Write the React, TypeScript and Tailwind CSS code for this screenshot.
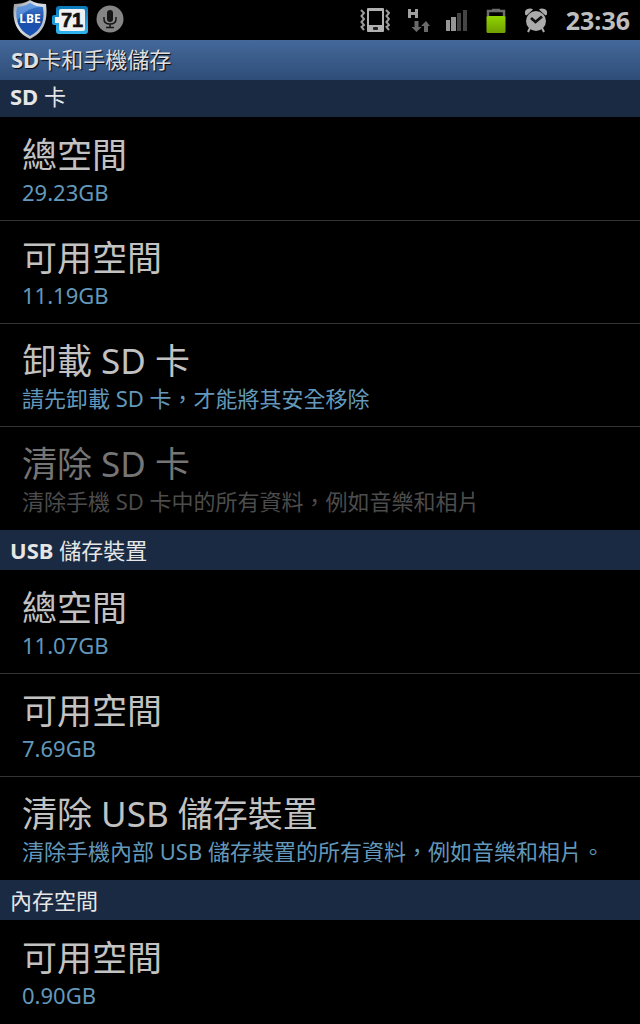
import React from 'react';

interface StorageItem {
    title: string;
    summary: string;
    kind: 'info' | 'action';
    disabled?: boolean;
}

interface StorageSection {
    latin: string; // bold part of the heading
    label: string;
    items: StorageItem[];
}

const sections: StorageSection[] = [
    {
        latin: 'SD',
        label: '卡',
        items: [
            { title: '總空間', summary: '29.23GB', kind: 'info' },
            { title: '可用空間', summary: '11.19GB', kind: 'info' },
            { title: '卸載 SD 卡', summary: '請先卸載 SD 卡，才能將其安全移除', kind: 'action' },
            { title: '清除 SD 卡', summary: '清除手機 SD 卡中的所有資料，例如音樂和相片', kind: 'action', disabled: true },
        ],
    },
    {
        latin: 'USB',
        label: '儲存裝置',
        items: [
            { title: '總空間', summary: '11.07GB', kind: 'info' },
            { title: '可用空間', summary: '7.69GB', kind: 'info' },
            { title: '清除 USB 儲存裝置', summary: '清除手機內部 USB 儲存裝置的所有資料，例如音樂和相片。', kind: 'action' },
        ],
    },
    {
        latin: '',
        label: '內存空間',
        items: [{ title: '可用空間', summary: '0.90GB', kind: 'info' }],
    },
];

function ShieldIcon() {
    return (
        <svg width="36" height="40" viewBox="0 0 36 40" aria-label="LBE">
            <defs>
                <linearGradient id="shield" x1="0" y1="0" x2="0" y2="1">
                    <stop offset="0" stopColor="#3f7fd0" />
                    <stop offset="0.5" stopColor="#1c4fa8" />
                    <stop offset="1" stopColor="#1a55b8" />
                </linearGradient>
                <linearGradient id="rim" x1="0" y1="0" x2="1" y2="1">
                    <stop offset="0" stopColor="#8b9199" />
                    <stop offset="0.4" stopColor="#dfe3e8" />
                    <stop offset="1" stopColor="#a9adb2" />
                </linearGradient>
            </defs>
            <path d="M18 0C13 3 7 4 2 4C0 19 3 32 18 39C33 32 36 19 34 4C29 4 23 3 18 0Z" fill="url(#rim)" />
            <path d="M18 3C13 6 9 7 5 7C3 20 6 30 18 36C30 30 33 20 31 7C27 7 23 6 18 3Z" fill="url(#shield)" />
            <path d="M18 3C13 6 9 7 5 7C4 13 4 16 5 22C9 13 18 8 28 7C25 6 22 5 18 3Z" fill="#7fb0ee" opacity="0.55" />
            <text x="18" y="23" textAnchor="middle" fontSize="12" fontWeight="700" fill="#fff">LBE</text>
        </svg>
    );
}

function BatteryPercentIcon() {
    return (
        <svg width="36" height="28" viewBox="0 0 36 28" aria-label="71">
            <defs>
                <linearGradient id="casing" x1="0" y1="0" x2="0" y2="1">
                    <stop offset="0" stopColor="#0a78b8" />
                    <stop offset="1" stopColor="#2fb4f0" />
                </linearGradient>
            </defs>
            <path d="M7 0H33Q36 0 36 3V25Q36 28 33 28H7Q4 28 4 25V19H2Q0 19 0 17V11Q0 9 2 9H4V3Q4 0 7 0Z" fill="url(#casing)" />
            <path d="M9 3H31Q33 3 33 5V23Q33 25 31 25H9Q7 25 7 23V17H3V11H7V5Q7 3 9 3Z" fill="#f0f1f3" />
            <text
                x="20"
                y="21"
                textAnchor="middle"
                fontSize="20"
                fontWeight="700"
                fontFamily="Liberation Sans, sans-serif"
                fill="#111"
                stroke="#111"
                strokeWidth="0.6"
            >
                71
            </text>
        </svg>
    );
}

function MicIcon() {
    return (
        <svg width="28" height="28" viewBox="0 0 28 28">
            <circle cx="14" cy="14" r="13.500" fill="#858585" />
            <rect x="11" y="5" width="6" height="12" rx="3" fill="#161616" />
            <path d="M8 12V14Q8 19 14 19Q20 19 20 14V12M14 19V22M10 22.500H18" fill="none" stroke="#161616" strokeWidth="1.5" />
        </svg>
    );
}

function VibrateIcon() {
    return (
        <svg width="30" height="26" viewBox="0 0 30 26">
            <rect x="7" y="1" width="17" height="24" rx="1" fill="#b0b0b0" />
            <rect x="9" y="4" width="13" height="14" fill="#000" />
            <rect x="13" y="20" width="5" height="3" rx="1" fill="#222" />
            <path d="M1 3L4 6L1.500 9L4 12L1.500 15L4 18L1.500 20L4 23" fill="none" stroke="#9c9c9c" strokeWidth="2" />
            <path d="M26 3L29 6L26.500 9L29 12L26.500 15L29 18L26.500 20L29 23" fill="none" stroke="#9c9c9c" strokeWidth="2" />
        </svg>
    );
}

function DataIcon() {
    return (
        <svg width="24" height="26" viewBox="0 0 24 26">
            <path d="M3.500 2V11M10.500 2V11M3 6.500H11" fill="none" stroke="#a0a0a0" strokeWidth="3" />
            <path d="M8.500 14V20H5.500L10.500 25L15.500 20H12.500V14Z" fill="#6a6a6a" />
            <path d="M18 25V19H15L20 14L24 19H22V25Z" fill="#6a6a6a" />
        </svg>
    );
}

function SignalIcon() {
    return (
        <svg width="22" height="24" viewBox="0 0 22 24">
            <rect x="0" y="12" width="4" height="11" fill="#969696" />
            <rect x="5" y="9" width="5" height="14" fill="#969696" />
            <rect x="11" y="5" width="4" height="18" fill="#444" />
            <rect x="17" y="2" width="4" height="21" fill="#444" />
        </svg>
    );
}

function BatteryIcon() {
    return (
        <svg width="20" height="26" viewBox="0 0 20 26">
            <defs>
                <linearGradient id="charge" x1="0" y1="0" x2="0" y2="1">
                    <stop offset="0" stopColor="#90d400" />
                    <stop offset="1" stopColor="#6f9f00" />
                </linearGradient>
            </defs>
            <path d="M2 10V4H18V10M6 3H14" fill="none" stroke="#6c6c6c" strokeWidth="2.5" />
            <rect x="0.500" y="9" width="19" height="17" rx="1.500" fill="url(#charge)" />
        </svg>
    );
}

function AlarmIcon() {
    return (
        <svg width="24" height="26" viewBox="0 0 24 26">
            <circle cx="12" cy="14" r="10" fill="#ababab" />
            <path d="M1 7.500Q0 1.500 6 1.500Q8 1.500 9 2.500L2.500 8.500ZM23 7.500Q24 1.500 18 1.500Q16 1.500 15 2.500L21.500 8.500Z" fill="#ababab" />
            <path d="M6 21L4 25M18 21L20 25" stroke="#ababab" strokeWidth="2" />
            <path d="M7 11L11.500 15L18 9.500" fill="none" stroke="#111" strokeWidth="2.800" />
        </svg>
    );
}

function StatusBar() {
    return (
        <div className="flex h-10 items-center justify-between bg-black pr-2.5 pl-3">
            <div className="flex items-center gap-1">
                <ShieldIcon />
                <BatteryPercentIcon />
                <div className="pb-0.5 pl-1">
                    <MicIcon />
                </div>
            </div>
            <div className="flex items-center gap-[18px]">
                <div className="flex items-center gap-4">
                    <VibrateIcon />
                    <DataIcon />
                    <SignalIcon />
                </div>
                <BatteryIcon />
                <AlarmIcon />
                <time className="text-[25px] leading-10 font-bold text-[#bebebe]">23:36</time>
            </div>
        </div>
    );
}

function StorageRow({ item }: { item: StorageItem }) {
    const content = (
        <>
            <span className={`block text-[35px] leading-10 ${item.disabled ? 'text-[#757575]' : 'text-[#c2c2c2]'}`}>
                {item.title}
            </span>
            <span className={`block text-[22px] leading-[34px] ${item.disabled ? 'text-[#4c4c4c]' : 'text-[#6398ba]'}`}>
                {item.summary}
            </span>
        </>
    );

    return (
        <li className="h-[103px] border-t border-[#333333] first:border-black">
            {item.kind === 'action' ? (
                <button
                    type="button"
                    disabled={item.disabled}
                    className="flex h-full w-full flex-col items-start justify-start px-[22px] pt-[17px] text-left whitespace-nowrap"
                >
                    {content}
                </button>
            ) : (
                <div className="px-[22px] pt-[17px]">{content}</div>
            )}
        </li>
    );
}

export default function App() {
    return (
        <div
            lang="zh-Hant"
            className="min-h-screen overflow-hidden bg-black font-['Noto_Sans','Noto_Sans_CJK_TC',sans-serif]"
        >
            <StatusBar />
            <h1 className="h-10 bg-linear-to-b from-[#44699a] to-[#2f4d78] px-[11px] text-[22px] leading-[38px] text-[#e0e0e0] [text-shadow:1px_1px_1px_#000000]">
                <span className="font-bold">SD</span>卡和手機儲存
            </h1>
            {sections.map((section, index) => (
                <section key={section.label}>
                    <h2
                        className={`border-black bg-[#1a2a42] px-2.5 text-[22px] text-[#e6e6e6] ${
                            index === 0 ? 'h-[37px] leading-8' : 'h-[41px] border-t leading-10'
                        }`}
                    >
                        {section.latin && <span className="font-bold">{section.latin} </span>}
                        {section.label}
                    </h2>
                    <ul>
                        {section.items.map((item) => (
                            <StorageRow key={item.title} item={item} />
                        ))}
                    </ul>
                </section>
            ))}
        </div>
    );
}
